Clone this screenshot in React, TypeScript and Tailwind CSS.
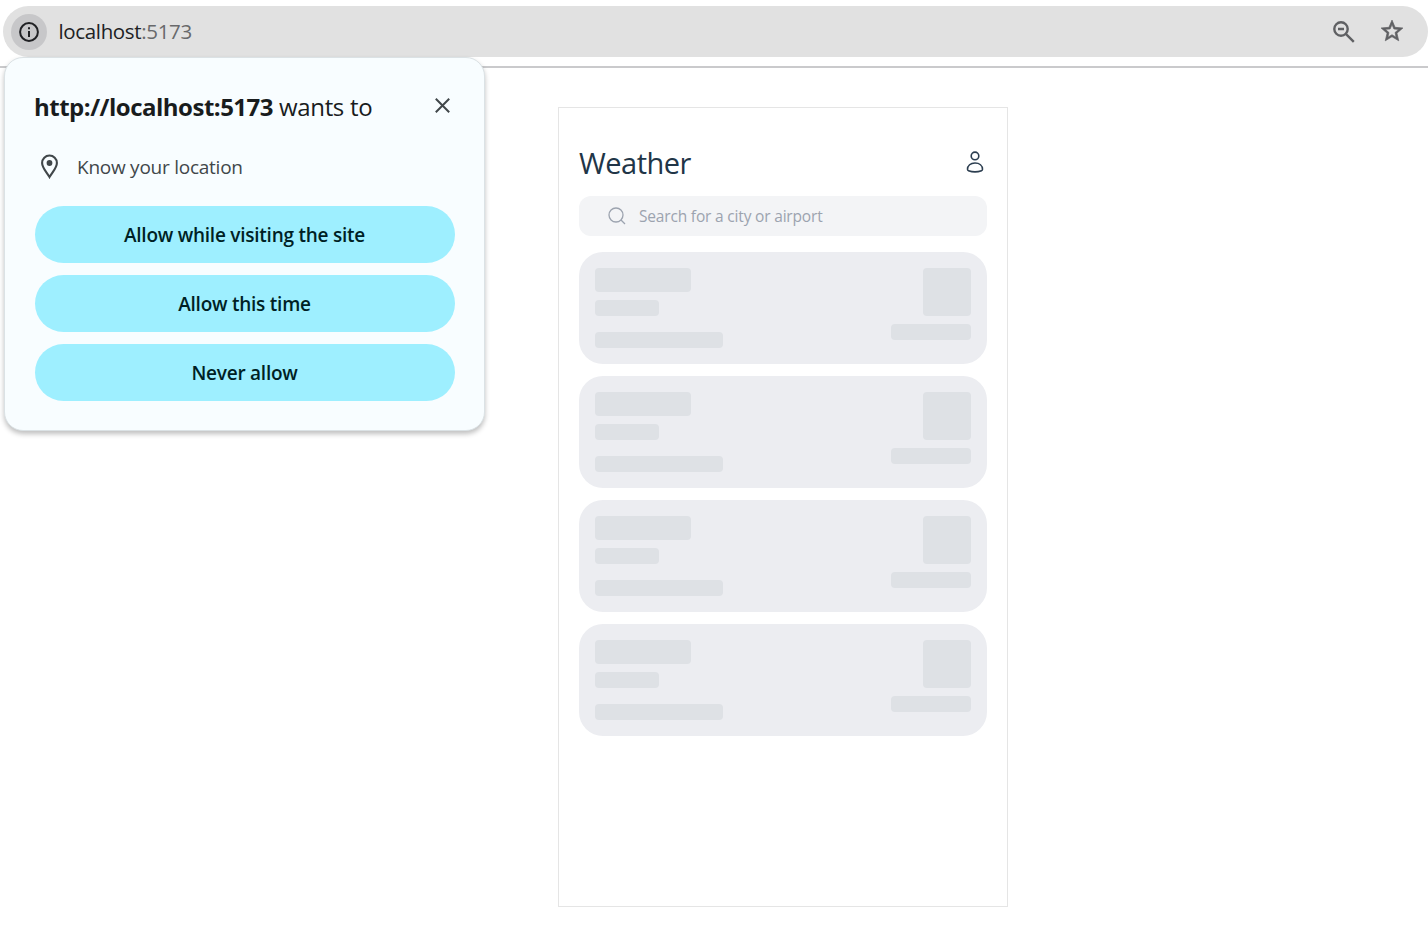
import React from "react";

function AddressBar() {
  return (
    <header className="h-17 border-b-2 border-[#cacacc] pt-1.5 pl-[3px]">
      <div className="flex h-[51px] items-center rounded-full bg-[#e1e1e1] pl-2">
        <div className="flex size-9 items-center justify-center rounded-full bg-[#c7c7c9]">
          <svg width="20" height="20" viewBox="0 0 20 20" fill="none" stroke="#202124" strokeWidth="2">
            <circle cx="10" cy="10" r="8.9" />
            <path d="M10 9v6M10 5.2v2" />
          </svg>
        </div>
        <div className="ml-[11.5px] pb-0.5 text-[20.5px] leading-7 tracking-[-0.35px] whitespace-nowrap text-[#202124]">
          localhost<span className="text-[#68696b]">:5173</span>
        </div>
        <div className="mr-6 ml-auto flex items-center gap-[25px] text-[#5f6063]">
          <svg width="22" height="22" viewBox="0 0 22 22" fill="none" stroke="currentColor" strokeWidth="2.4">
            <circle cx="8" cy="8" r="6.7" />
            <path d="M5 8h6M12.8 12.8l8 8" />
          </svg>
          <svg className="mb-px" width="24" height="24" viewBox="1 1 22 22" fill="currentColor">
            <path d="m22 9.24-7.19-.62L12 2 9.19 8.63 2 9.24l5.46 4.73L5.82 21 12 17.27 18.18 21l-1.63-7.03L22 9.24zM12 15.4l-3.76 2.27 1-4.28-3.32-2.88 4.38-.38L12 6.1l1.71 4.04 4.38.38-3.32 2.88 1 4.28L12 15.4z" stroke="currentColor" strokeWidth=".6" />
          </svg>
        </div>
      </div>
    </header>
  );
}

function PromptButton({ children }: { children: React.ReactNode }) {
  return (
    <button className="flex h-[57px] w-full items-center justify-center rounded-full bg-[#9eefff] pt-px pr-px text-[19px] font-semibold tracking-[-0.24px] whitespace-nowrap text-[#001f25]">
      {children}
    </button>
  );
}

function LocationPrompt() {
  return (
    <section className="absolute top-[57px] left-1 h-[374px] w-[481px] rounded-[19px] border border-[#dbe2e5] bg-[#f8fdff] px-[30px] pt-[33px] shadow-[0_3px_5px_rgba(0,0,0,0.25)]">
      <div className="flex h-8 items-center justify-between">
        <h2 className="-ml-px text-[24px] font-medium tracking-[-0.32px] whitespace-nowrap text-[#191c1d]">
          <b className="font-bold tracking-[-0.5px]">http://localhost:5173</b> wants to
        </h2>
        <svg className="mr-1 mb-1" width="15" height="15" viewBox="0 0 15 15" stroke="#41474a" strokeWidth="2">
          <path d="m.8.8 13.4 13.4M14.2.8.8 14.2" />
        </svg>
      </div>
      <div className="mt-[31px] flex h-6 items-center">
        <svg className="ml-[5px]" width="19" height="25" viewBox="0 0 19 25" fill="none">
          <path d="M9.5 1.5a7.4 7.4 0 0 0-7.4 7.4c0 4.8 4.4 9 7.4 14.2 3-5.2 7.4-9.4 7.4-14.2a7.4 7.4 0 0 0-7.4-7.4z" stroke="#41474a" strokeWidth="2.1" />
          <circle cx="9.5" cy="9" r="2.9" fill="#41474a" />
        </svg>
        <p className="ml-[18px] pt-[3px] text-[19px] tracking-[-0.25px] whitespace-nowrap text-[#41474a]">Know your location</p>
      </div>
      <div className="mt-7 -mr-px flex flex-col gap-3">
        <PromptButton>Allow while visiting the site</PromptButton>
        <PromptButton>Allow this time</PromptButton>
        <PromptButton>Never allow</PromptButton>
      </div>
    </section>
  );
}

function SkeletonCard() {
  return (
    <div className="flex h-28 justify-between rounded-3xl bg-[#ecedf1] p-4">
      <div>
        <div className="h-6 w-24 rounded bg-[#dee1e5]" />
        <div className="mt-2 h-4 w-16 rounded bg-[#dee1e5]" />
        <div className="mt-4 h-4 w-32 rounded bg-[#dee1e5]" />
      </div>
      <div className="flex flex-col items-end gap-2">
        <div className="size-12 rounded bg-[#dee1e5]" />
        <div className="h-4 w-20 rounded bg-[#dee1e5]" />
      </div>
    </div>
  );
}

function WeatherPanel() {
  return (
    <main className="mt-[39px] ml-[558px] h-[800px] w-[450px] border border-[#e5e5e5] bg-white px-5 pt-[35px]">
      <div className="flex h-10 items-center justify-between">
        <h1 className="text-[29px] tracking-[-0.5px] whitespace-nowrap text-[#213547]">Weather</h1>
        <svg className="mr-[3px] mb-[3px]" width="18" height="22" viewBox="0 0 18 22" fill="none" stroke="#2c3e50" strokeWidth="1.6">
          <circle cx="9" cy="4.9" r="3.8" />
          <path d="M9 12c-4.5 0-7.5 2.600-7.500 6.300 0 .8.2 1.100 1 1.400 4 1.500 9 1.500 13 0 .8-.3 1-.6 1-1.400 0-3.700-3-6.300-7.500-6.300z" />
        </svg>
      </div>
      <div className="mt-[13px] flex h-10 items-center rounded-xl bg-[#f3f4f6] pl-[29px] text-[#9ca3af]">
        <svg width="18" height="18" viewBox="0 0 18 18" fill="none" stroke="currentColor" strokeWidth="1.3">
          <circle cx="8" cy="8" r="7" />
          <path d="m13 13 4 4" />
        </svg>
        <span className="ml-[13px] pt-0.5 text-[15.5px] tracking-[-0.18px] whitespace-nowrap">Search for a city or airport</span>
      </div>
      <div className="mt-4 flex flex-col gap-3">
        <SkeletonCard />
        <SkeletonCard />
        <SkeletonCard />
        <SkeletonCard />
      </div>
    </main>
  );
}

export default function App() {
  return (
    <div className="relative h-[943px] w-full overflow-hidden bg-white font-['Open_Sans','Noto_Sans',sans-serif]">
      <AddressBar />
      <WeatherPanel />
      <LocationPrompt />
    </div>
  );
}
